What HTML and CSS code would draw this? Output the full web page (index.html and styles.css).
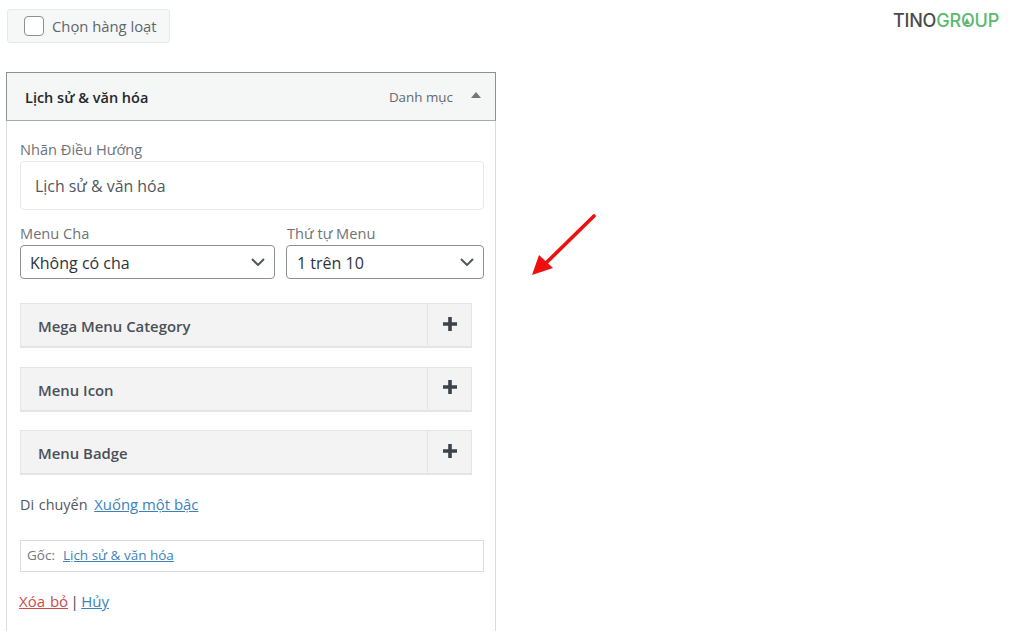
FILE: index.html
```html
<!DOCTYPE html>
<html lang="vi">
<head>
<meta charset="utf-8">
<title>Menu</title>
<link rel="stylesheet" href="styles.css">
</head>
<body>
<div class="page">
  <div class="top">
    <label class="bulk"><span class="check"></span><span>Chọn hàng loạt</span></label>
    <div class="logo"><span class="tino">TINO</span><span class="group">GR<span class="o">O</span>UP</span></div>
  </div>
  <section class="panel">
    <header class="head">
      <strong class="title">Lịch sử &amp; văn hóa</strong>
      <span class="kind">Danh mục</span>
      <span class="caret"></span>
    </header>
    <div class="body">
      <div class="label l-nav">Nhãn Điều Hướng</div>
      <div class="input">Lịch sử &amp; văn hóa</div>
      <div class="selects">
        <div class="field">
          <div class="label">Menu Cha</div>
          <div class="select"><span>Không có cha</span>
            <svg class="chev" viewBox="0 0 14 8"><path d="M1 1l6 6 6-6"/></svg></div>
        </div>
        <div class="field">
          <div class="label">Thứ tự Menu</div>
          <div class="select"><span>1 trên 10</span>
            <svg class="chev" viewBox="0 0 14 8"><path d="M1 1l6 6 6-6"/></svg></div>
        </div>
      </div>
      <div class="acc"><div class="acc-title">Mega Menu Category</div><div class="acc-btn"><svg class="plus" viewBox="0 0 14 14"><path d="M7 0v14M0 7h14"/></svg></div></div>
      <div class="acc"><div class="acc-title">Menu Icon</div><div class="acc-btn"><svg class="plus" viewBox="0 0 14 14"><path d="M7 0v14M0 7h14"/></svg></div></div>
      <div class="acc"><div class="acc-title">Menu Badge</div><div class="acc-btn"><svg class="plus" viewBox="0 0 14 14"><path d="M7 0v14M0 7h14"/></svg></div></div>
      <p class="move">Di chuyển <a href="#" class="link">Xuống một bậc</a></p>
      <div class="origin">Gốc: <a href="#" class="link">Lịch sử &amp; văn hóa</a></div>
      <p class="actions"><a href="#" class="del">Xóa bỏ</a> | <a href="#" class="link">Hủy</a></p>
    </div>
  </section>
  <svg class="arrow" viewBox="0 0 70 66"><path class="shaft" d="M63 2L14 50"/><path class="tip" d="M1 61L8 41 22 54z"/></svg>
</div>
</body>
</html>
```

FILE: styles.css
```css
* { box-sizing: border-box; }
html, body { margin: 0; height: 631px; overflow: hidden; background: #fff; }
body { font-family: "Open Sans", "Noto Sans", sans-serif; color: #3c434a; }
.page { position: relative; height: 631px; overflow: hidden; padding: 9px 25px 0 6px; }
.top { display: flex; justify-content: space-between; align-items: flex-start; height: 63px; }
.bulk { margin-left: 1px; width: 163px; height: 34px; display: flex; align-items: center; gap: 8px; padding-left: 16px; background: #f6f7f7; border: 1px solid #e6e8ea; border-radius: 3px; font-size: 14.8px; color: #5e666e; }
.check { width: 20px; height: 20px; border: 1px solid #8c8f94; border-radius: 4px; background: #fff; }
.logo { font-size: 18px; font-weight: 500; letter-spacing: -0.2px; line-height: 24px; font-family: "Inter", sans-serif; }
.tino { color: #4a4a4a; }
.group { color: #5cb870; }
.o { position: relative; }
.o::after { content: ""; position: absolute; left: 50%; top: 8px; margin-left: -3.5px; border-left: 3.5px solid transparent; border-right: 3.5px solid transparent; border-bottom: 6px solid #5cb870; }
.panel { width: 490px; border: 1px solid #dcdcde; border-top: 0; height: 600px; }
.head { margin: 0 -1px; height: 49px; display: flex; align-items: center; padding: 0 14px 0 18px; background: #f5f6f6; border: 1px solid #8c8f94; border-bottom-color: #a7aaad; }
.title { font-size: 14.5px; font-weight: 600; color: #23282d; flex: 1; padding-top: 1px; }
.kind { font-size: 13.4px; color: #646970; margin-right: 18px; }
.caret { width: 0; height: 0; border-left: 5px solid transparent; border-right: 5px solid transparent; border-bottom: 6px solid #72777c; margin-bottom: 3px; }
.body { padding: 17px 11px 0 13px; }
.label { font-size: 14.6px; line-height: 22px; padding-bottom: 1px; color: #6d7379; }
.input { margin-top: 0; height: 49px; border: 1px solid #e6e7e8; border-radius: 4px; padding-left: 14px; display: flex; align-items: center; font-size: 15.9px; color: #50575e; }
.selects { display: flex; gap: 11px; margin-top: 12px; }
.field:first-child { width: 255px; }
.field:last-child { width: 198px; }
.select { height: 34px; border: 1px solid #8c8f94; border-radius: 4px; display: flex; justify-content: space-between; align-items: center; padding: 1px 9px 0 9px; font-size: 16px; color: #2c3338; }
.field:last-child .label { margin-left: 1px; }
.field:last-child .select { padding-left: 10px; }
.chev { width: 14px; height: 8px; fill: none; stroke: #50575e; stroke-width: 2; margin-top: -1px; }
.acc { width: 452px; height: 45px; margin-top: 18.5px; display: flex; background: #f3f3f3; border: 1px solid #e5e5e5; border-bottom-width: 2px; }
.selects + .acc { margin-top: 24px; }
.acc-title { flex: 1; padding-left: 17px; line-height: 44px; font-size: 14.9px; font-weight: 600; color: #4a5058; }
.acc-btn { width: 44px; border-left: 1px solid #e5e5e5; display: flex; align-items: center; justify-content: center; padding-bottom: 3px; }
.plus { width: 14px; height: 14px; fill: none; stroke: #3c434a; stroke-width: 3.6; }
.move { margin: 17px 0 0; font-size: 14.4px; line-height: 24px; color: #50575e; word-spacing: 1px; }
.move .link { font-size: 14.9px; margin-left: 2px; }
.link { color: #3b82bd; text-decoration: underline; word-spacing: 0; margin-left: 2px; }
.origin { margin-top: 23px; height: 32px; border: 1px solid #dcdcde; padding: 0 0 2px 6px; display: flex; align-items: center; gap: 6px; font-size: 13.5px; color: #72777c; }
.actions { margin: 17px 0 0; font-size: 15px; line-height: 24px; color: #3c434a; word-spacing: -1.5px; }
.actions .link { margin-left: 0; }
.del { color: #cc4b4b; text-decoration: underline; margin-left: -1px; word-spacing: 1px; }
.arrow { position: absolute; left: 531px; top: 214px; width: 70px; height: 66px; }
.shaft { stroke: #f00f0f; stroke-width: 3.6; stroke-linecap: round; fill: none; }
.tip { fill: #f00f0f; }
```
